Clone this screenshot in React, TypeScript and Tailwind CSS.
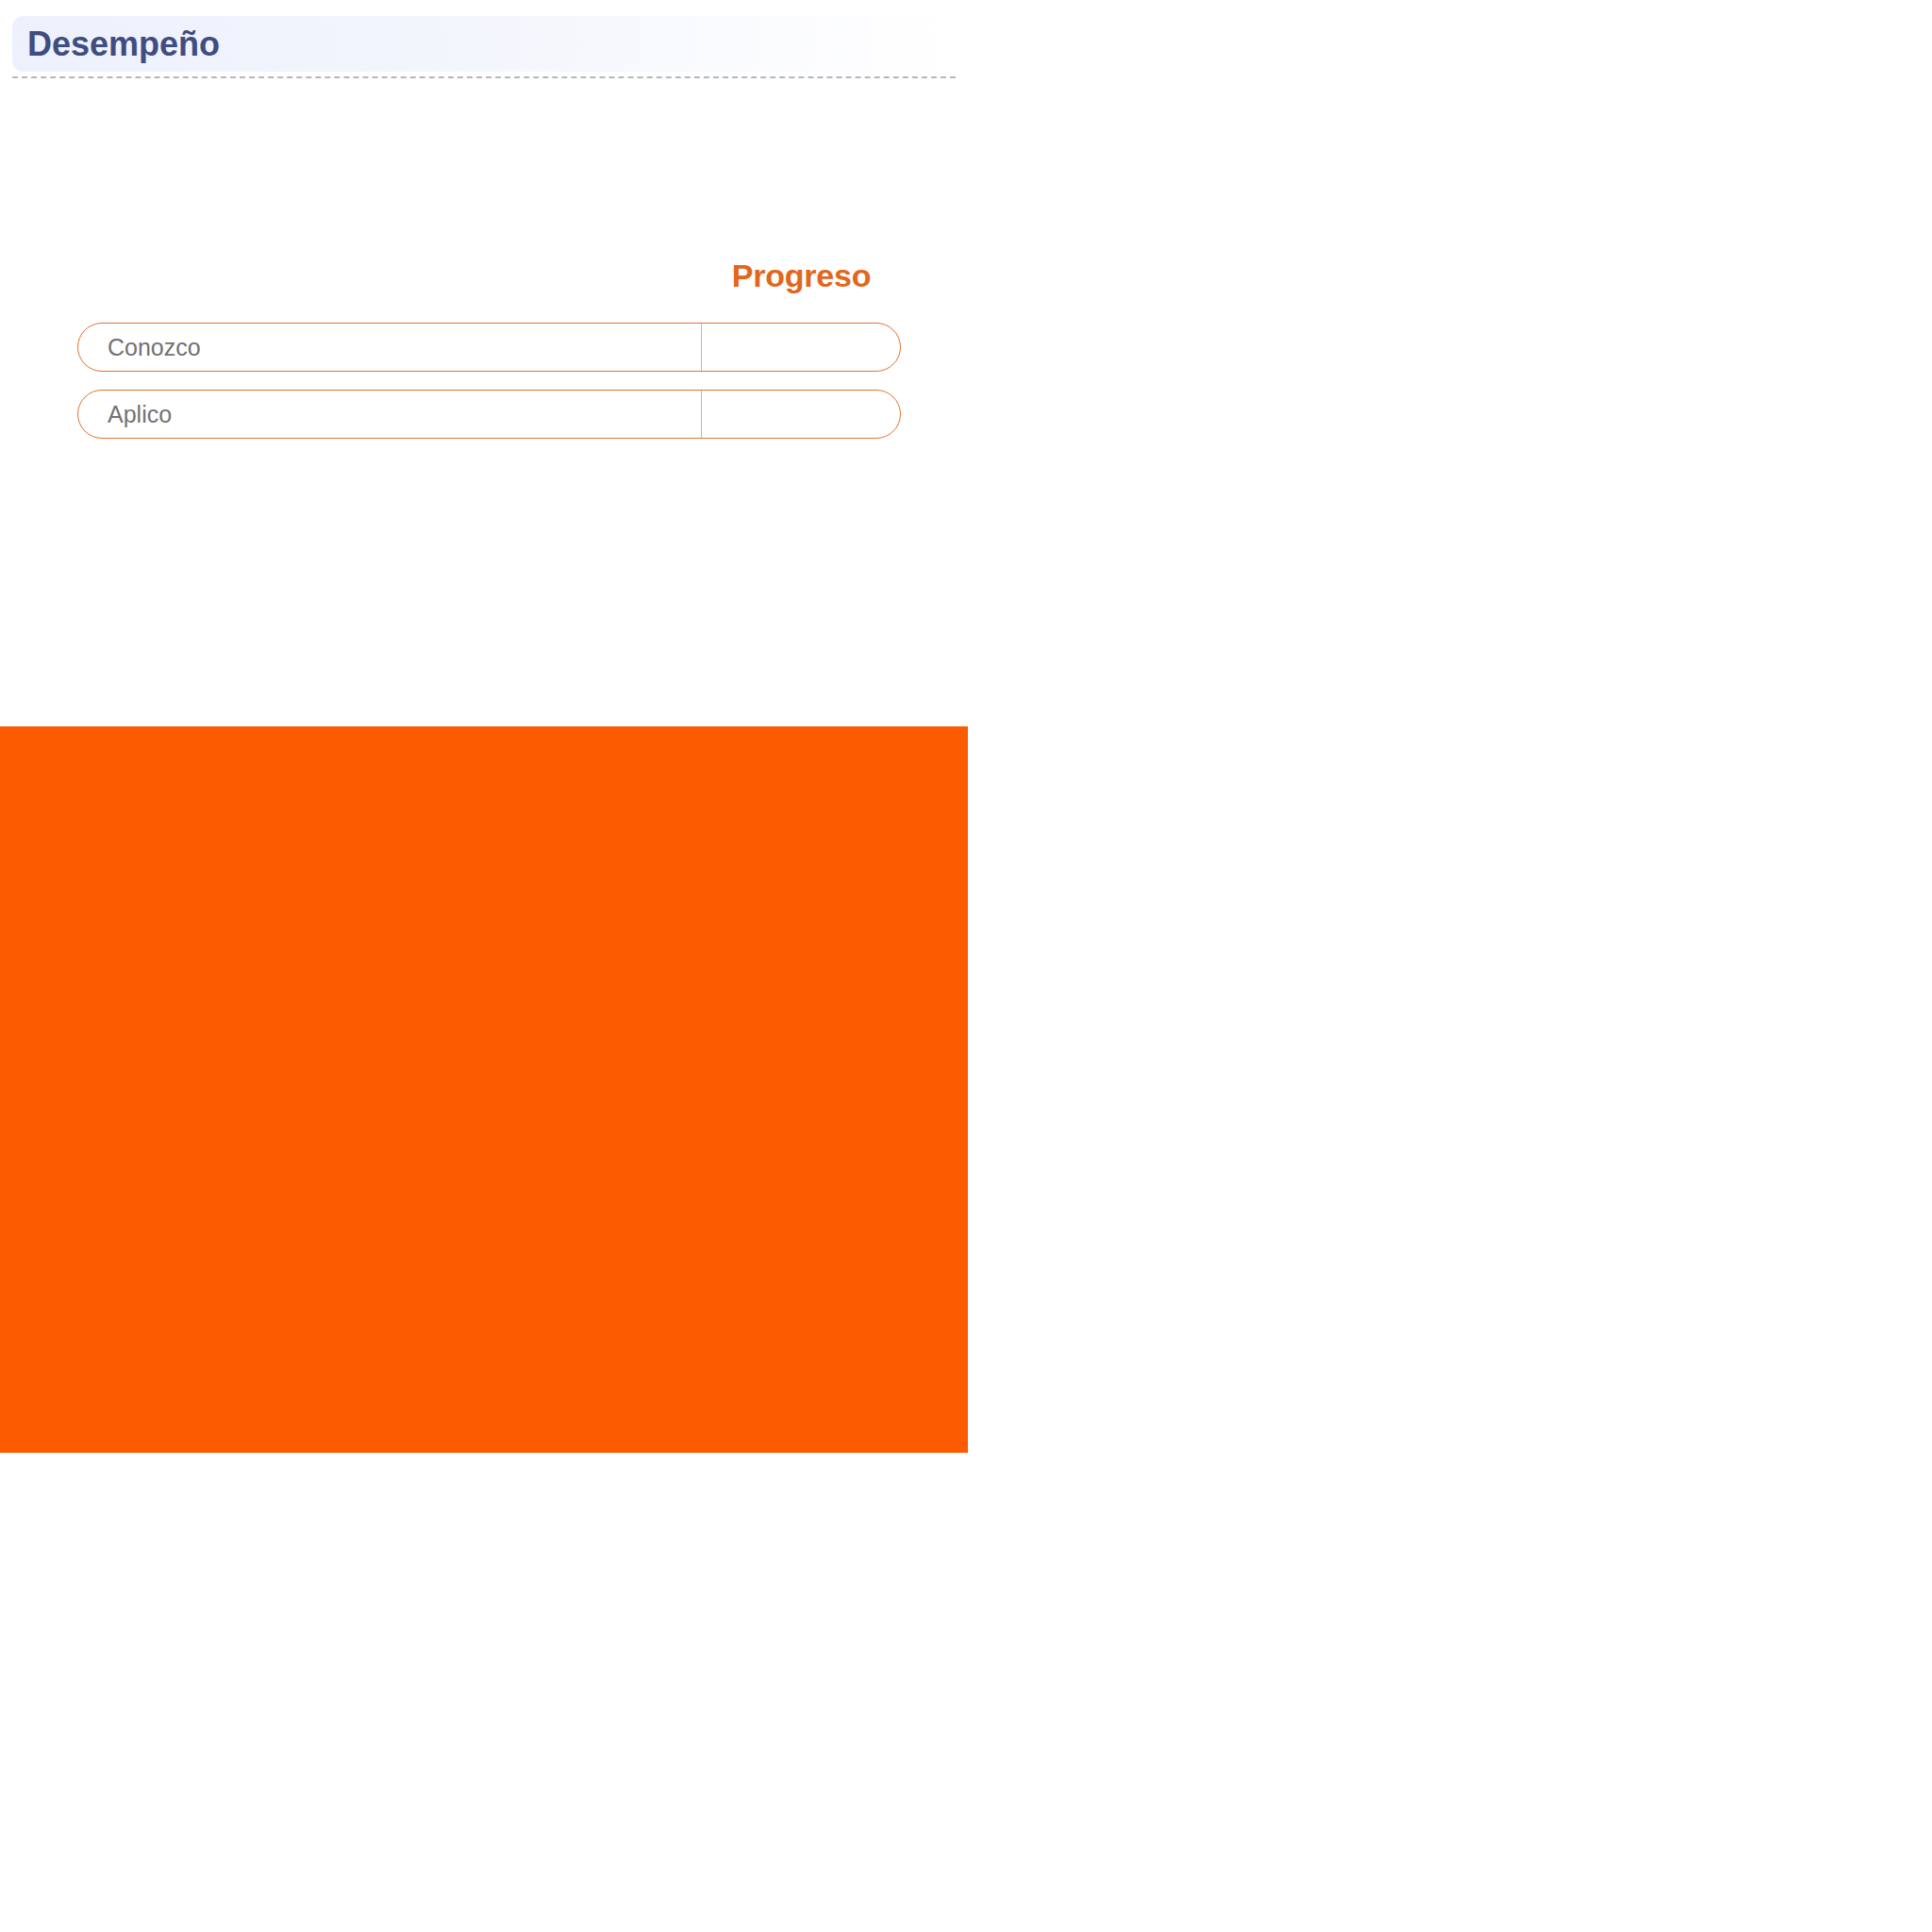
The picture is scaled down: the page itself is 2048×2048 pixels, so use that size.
const rows = ["Conozco", "Aplico"];

const App = () => {
  return (
    <div className="w-[1026px] bg-white font-['Liberation_Sans',Arial,sans-serif]">
      <div className="px-[13px] pt-[17px]">
        <div className="flex h-[59px] items-center rounded-[12px] bg-gradient-to-r from-[#edf1fd] via-[#f4f6fd] to-white pl-4">
          <h2 className="text-[36px] font-bold leading-none text-[#3f4d80]">Desempeño</h2>
        </div>
        <div className="mt-[5px] border-t-2 border-dashed border-[#b4b7c2]" />
      </div>

      <div className="ml-[82px] w-[873px] pt-[192px]">
        <div className="flex justify-end">
          <div className="w-[211px] text-center text-[34px] font-bold leading-none tracking-[-0.2px] text-[#e2661c]">Progreso</div>
        </div>
        <div className="mt-[33px] flex flex-col gap-[19px]">
          {rows.map((label) => (
            <div key={label} className="flex h-[52px] rounded-full border border-[#e4722f]">
              <div className="flex flex-1 items-center pl-[31px] text-[25px] leading-none text-[#727272]">{label}</div>
              <div className="w-[211px] border-l border-[#eea97c]" />
            </div>
          ))}
        </div>
      </div>

      <div className="mt-[305px] h-[770px] w-[1026px] bg-[#fc5b02]" />
    </div>
  );
};

export default App;
